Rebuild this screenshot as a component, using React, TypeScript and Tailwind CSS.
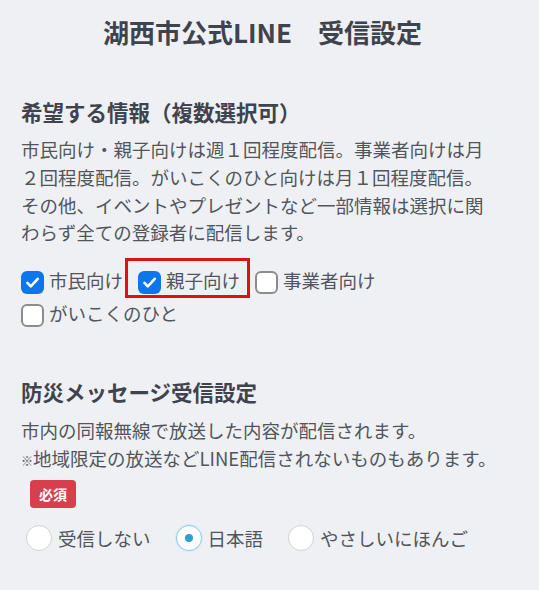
import React from 'react';

const font = { fontFamily: '"Noto Sans CJK JP", "Noto Sans", sans-serif' };

function CheckBox({ checked }: { checked: boolean }) {
  if (checked) {
    return (
      <span className="mt-[4px] flex h-[23px] w-[23px] shrink-0 items-center justify-center rounded-[6px] bg-[#0b76ee]">
        <svg width="17" height="17" viewBox="0 0 16 16" fill="none">
          <path d="M3.2 8.3l3.2 3.4L12.9 4.5" stroke="#fff" strokeWidth="2.4" strokeLinecap="round" strokeLinejoin="round" />
        </svg>
      </span>
    );
  }
  return <span className="mt-[4px] h-[23px] w-[23px] shrink-0 rounded-[6px] border-2 border-[#8c8c8c] bg-white" />;
}

function Option({ label, checked, marked }: { label: string; checked: boolean; marked?: boolean }) {
  return (
    <label className="relative mr-[15px] flex items-center gap-[5px]">
      <CheckBox checked={checked} />
      <span className="text-[18.5px] leading-[33px] text-[#51565c]">{label}</span>
      {marked && (
        <span className="pointer-events-none absolute -top-[6px] -bottom-[1px] -left-[13px] -right-[10px] border-[3px] border-[#e0101b]" />
      )}
    </label>
  );
}

function Radio({ label, checked }: { label: string; checked: boolean }) {
  return (
    <label className="mr-[25px] flex items-center gap-[6px]">
      {checked ? (
        <span className="flex h-[26px] w-[26px] items-center justify-center rounded-full border-[1.5px] border-[#8fcbe6] bg-white shadow-[0_0_0_1px_#d5ecf6]">
          <span className="h-[8px] w-[8px] rounded-full bg-[#2f9fd2]" />
        </span>
      ) : (
        <span className="h-[26px] w-[26px] rounded-full border-[1.5px] border-[#d2d2d2] bg-white" />
      )}
      <span className="text-[18.5px] leading-[30px] text-[#51565c]">{label}</span>
    </label>
  );
}

export default function App() {
  return (
    <div className="min-h-[590px] w-full bg-[#eff0f4] px-[21px]" style={font}>
      <div className="flex h-[62px] items-center justify-center pr-[14px]">
        <h1 className="text-[26px] font-bold text-[#3f434e]">湖西市公式LINE　受信設定</h1>
      </div>

      <section className="mt-[34px]">
        <h2 className="text-[21.5px] font-bold leading-[32px] text-[#3f434e]">希望する情報（複数選択可）</h2>
        <p className="mt-[8px] max-w-[475px] text-[18.5px] leading-[27.75px] text-[#51565c]">
          市民向け・親子向けは週１回程度配信。事業者向けは月２回程度配信。がいこくのひと向けは月１回程度配信。その他、イベントやプレゼントなど一部情報は選択に関わらず全ての登録者に配信します。
        </p>
        <div className="mt-[16.5px] flex flex-wrap">
          <Option label="市民向け" checked />
          <Option label="親子向け" checked marked />
          <Option label="事業者向け" checked={false} />
          <Option label="がいこくのひと" checked={false} />
        </div>
      </section>

      <section className="mt-[46.5px]">
        <h2 className="text-[21.5px] font-bold leading-[32px] text-[#3f434e]">防災メッセージ受信設定</h2>
        <p className="mt-[8px] text-[18.5px] leading-[28px] text-[#51565c]">
          市内の同報無線で放送した内容が配信されます。
          <br />
          <span className="text-[12px]">※</span>地域限定の放送などLINE配信されないものもあります。
        </p>
        <span className="ml-[9px] mt-[5px] inline-flex h-[28px] w-[46px] items-center justify-center rounded-[4px] bg-[#d83f4c] text-[14px] font-bold text-white">
          必須
        </span>
        <div className="ml-[5px] mt-[15px] flex">
          <Radio label="受信しない" checked={false} />
          <Radio label="日本語" checked />
          <Radio label="やさしいにほんご" checked={false} />
        </div>
      </section>
    </div>
  );
}
